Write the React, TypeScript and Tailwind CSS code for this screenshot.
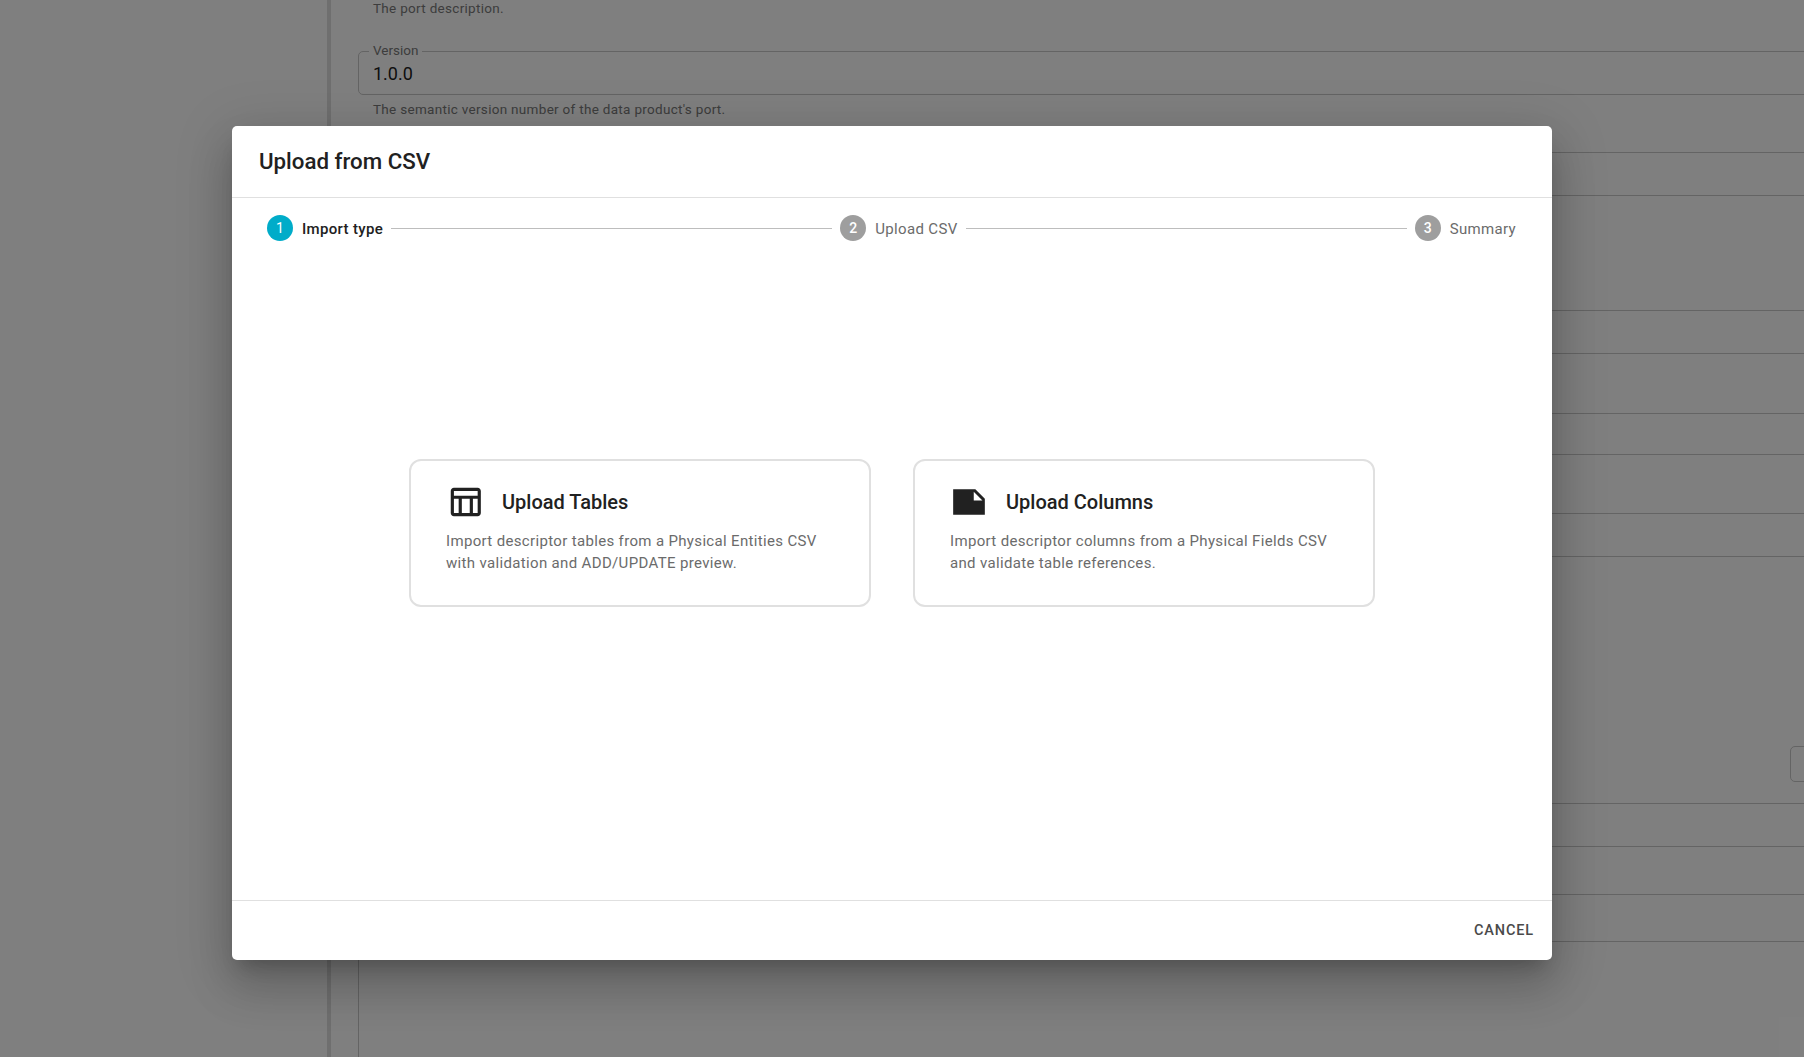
const tableIcon =
  "M20 3H5c-1.1 0-2 .9-2 2v14c0 1.1.9 2 2 2h15c1.1 0 2-.9 2-2V5c0-1.1-.9-2-2-2zm0 2v3H5V5h15zm-5 14h-5v-9h5v9zM5 10h3v9H5v-9zm12 9v-9h3v9h-3z";
const noteIcon = "M22 10l-6-6H2v16h20V10zm-7-4.5l5.5 5.5H15V5.5z";

function Step({ n, label, active }: { n: number; label: string; active?: boolean }) {
  return (
    <div className="flex items-center">
      <div
        className={
          active
            ? "flex h-[26px] w-[26px] items-center justify-center rounded-full bg-[#00acc9] text-[14px] text-white"
            : "flex h-[26px] w-[26px] items-center justify-center rounded-full bg-[#9e9e9e] text-[14px] font-medium text-white"
        }
      >
        {n}
      </div>
      <span
        className={
          active
            ? "ml-[9px] mt-[3px] text-[15px] font-medium tracking-[0.33px] text-[#212121]"
            : "ml-[9px] mt-[3px] text-[15px] tracking-[0.33px] text-[#6b6b6b]"
        }
      >
        {label}
      </span>
    </div>
  );
}

function ImportCard({ icon, title, lines }: { icon: string; title: string; lines: string[] }) {
  return (
    <button className="flex h-[148px] w-[462px] flex-col rounded-[12px] border-2 border-[#e0e0e0] bg-white pl-[35px] pt-[22px] text-left">
      <div className="flex items-center gap-[18px]">
        <svg viewBox="0 0 24 24" className="h-[38px] w-[38px] fill-[#212121]">
          <path d={icon} />
        </svg>
        <span className="text-[20px] font-medium text-[#212121]">{title}</span>
      </div>
      <p className="mt-[9px] text-[15px] leading-[22.5px] tracking-[0.34px] text-[#6b6b6b]">
        {lines[0]}
        <br />
        {lines[1]}
      </p>
    </button>
  );
}

function Field({ top, height }: { top: number; height: number }) {
  return (
    <div
      className="w-[1600px] rounded-[5px] border border-[#c8c8c8]"
      style={{ marginTop: top, height }}
    />
  );
}

export default function App() {
  return (
    <div className="relative h-[1057px] w-[1804px] overflow-hidden bg-white font-['Roboto',sans-serif]">
      {/* page under the dialog */}
      <div className="flex h-full">
        <div className="w-[327px] shrink-0" />
        <div className="w-1 shrink-0 bg-[#dedede]" />
        <div className="flex-1 pl-[27px]">
          <p className="ml-[15px] text-[13.5px] leading-4 tracking-[0.3px] text-[#7a7a7a]">The port description.</p>
          <div className="relative mt-[35px] h-[44px] w-[1600px] rounded-[5px] border border-[#c8c8c8] pl-[14px] pt-[10px] text-[18px] leading-6 text-[#212121]">
            <span className="absolute -top-[10px] left-[10px] bg-white px-1 text-[13.5px] leading-4 text-[#7a7a7a]">
              Version
            </span>
            1.0.0
          </div>
          <p className="ml-[15px] mt-[6px] text-[13.5px] leading-4 tracking-[0.3px] text-[#7a7a7a]">
            The semantic version number of the data product's port.
          </p>
          <Field top={35} height={44} />
          <Field top={114} height={44} />
          <Field top={59} height={42} />
          <Field top={58} height={44} />
          <div className="ml-[1432px] mt-[189px] h-[36px] w-[120px] rounded-[5px] border border-[#c8c8c8]" />
          <Field top={21} height={44} />
          <Field top={47} height={48} />
          <div className="h-[200px] w-[1600px] border-l border-[#c8c8c8]" />
        </div>
      </div>

      {/* backdrop */}
      <div className="absolute inset-0 bg-black/50" />

      {/* dialog */}
      <div className="absolute left-[232px] top-[126px] flex h-[834px] w-[1320px] flex-col rounded-[5px] bg-white shadow-[0_13px_17px_-8px_rgba(0,0,0,0.2),0_28px_44px_3px_rgba(0,0,0,0.14),0_10px_53px_9px_rgba(0,0,0,0.12)]">
        <div className="flex h-[72px] shrink-0 items-center border-b border-[#e0e0e0] pl-[27px]">
          <h2 className="text-[22.3px] font-medium text-[#212121]">Upload from CSV</h2>
        </div>
        <div className="flex items-center pl-[35px] pr-[36px] pt-[17px]">
          <Step n={1} label="Import type" active />
          <div className="mx-2 h-px flex-1 bg-[#bdbdbd]" />
          <Step n={2} label="Upload CSV" />
          <div className="mx-2 h-px flex-1 bg-[#bdbdbd]" />
          <Step n={3} label="Summary" />
        </div>
        <div className="flex flex-1 items-center justify-center gap-[42px] pb-[76px]">
          <ImportCard
            icon={tableIcon}
            title="Upload Tables"
            lines={["Import descriptor tables from a Physical Entities CSV", "with validation and ADD/UPDATE preview."]}
          />
          <ImportCard
            icon={noteIcon}
            title="Upload Columns"
            lines={["Import descriptor columns from a Physical Fields CSV", "and validate table references."]}
          />
        </div>
        <div className="flex h-[60px] shrink-0 items-center justify-end border-t border-[#e0e0e0] pr-[18px] pt-px">
          <span className="text-[14.5px] font-medium tracking-[0.85px] text-[#4a4a4a]">CANCEL</span>
        </div>
      </div>
    </div>
  );
}
